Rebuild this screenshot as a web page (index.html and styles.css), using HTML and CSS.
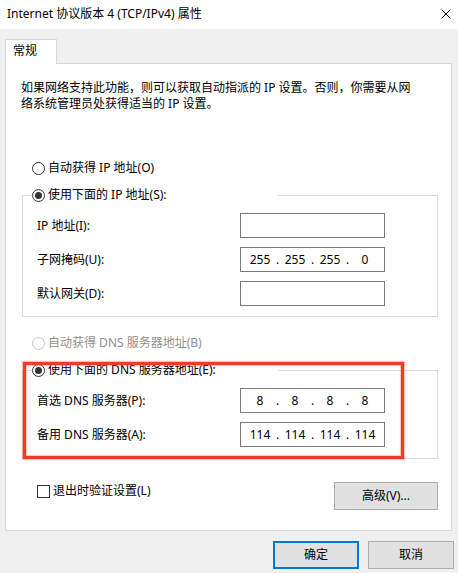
FILE: index.html
```html
<!DOCTYPE html>
<html lang="zh-CN">
<head>
<meta charset="utf-8">
<title>Internet 协议版本 4 (TCP/IPv4) 属性</title>
<link rel="stylesheet" href="styles.css">
</head>
<body>
<div class="window">
  <div class="titlebar">
    <span class="title">Internet 协议版本 4 (TCP/IPv4) 属性</span>
    <svg class="close" width="10" height="10" viewBox="0 0 10 10"><path d="M0.5 0.5 L9.5 9.5 M9.5 0.5 L0.5 9.5" stroke="#000" stroke-width="1" fill="none"/></svg>
  </div>
  <div class="body">
    <div class="tab">常规</div>
    <div class="panel">
      <p class="desc">如果网络支持此功能，则可以获取自动指派的 IP 设置。否则，你需要从网<br>络系统管理员处获得适当的 IP 设置。</p>

      <div class="radio-row auto-ip"><span class="radio"></span><span>自动获得 IP 地址(O)</span></div>

      <fieldset class="group g-ip">
        <legend><span class="radio checked"></span><span>使用下面的 IP 地址(S):</span></legend>
        <div class="field-grid">
          <span class="label">IP 地址(I):</span>
          <div class="ipbox"></div>
          <span class="label">子网掩码(U):</span>
          <div class="ipbox"><span class="seg">255</span><span class="dot">.</span><span class="seg">255</span><span class="dot">.</span><span class="seg">255</span><span class="dot">.</span><span class="seg">0</span></div>
          <span class="label">默认网关(D):</span>
          <div class="ipbox"></div>
        </div>
      </fieldset>

      <div class="radio-row auto-dns disabled"><span class="radio"></span><span>自动获得 DNS 服务器地址(B)</span></div>

      <fieldset class="group g-dns">
        <legend><span class="radio checked"></span><span>使用下面的 DNS 服务器地址(E):</span></legend>
        <div class="field-grid">
          <span class="label">首选 DNS 服务器(P):</span>
          <div class="ipbox"><span class="seg">8</span><span class="dot">.</span><span class="seg">8</span><span class="dot">.</span><span class="seg">8</span><span class="dot">.</span><span class="seg">8</span></div>
          <span class="label">备用 DNS 服务器(A):</span>
          <div class="ipbox"><span class="seg">114</span><span class="dot">.</span><span class="seg">114</span><span class="dot">.</span><span class="seg">114</span><span class="dot">.</span><span class="seg">114</span></div>
        </div>
      </fieldset>

      <div class="bottom-row">
        <label class="check"><span class="checkbox"></span><span>退出时验证设置(L)</span></label>
        <button class="btn advanced">高级(V)...</button>
      </div>

      <div class="highlight"></div>
    </div>
    <div class="actions">
      <button class="btn primary">确定</button>
      <button class="btn">取消</button>
    </div>
  </div>
</div>
</body>
</html>
```
FILE: styles.css
```css
* { box-sizing: border-box; }
html, body { margin: 0; padding: 0; }
body {
  width: 458px;
  height: 573px;
  background: #f0f0f0;
  font-family: "Noto Sans", "Noto Sans CJK SC", sans-serif;
  font-size: 12px;
  color: #000;
  overflow: hidden;
}
.window { width: 458px; height: 573px; display: flex; flex-direction: column; }

.titlebar {
  height: 29px;
  background: #fff;
  display: flex;
  align-items: center;
  justify-content: space-between;
  padding: 0 7px 2px 7px;
  flex: none;
}
.title { font-size: 12px; line-height: 16px; }
.close { display: block; }

.body {
  flex: 1;
  background: #f0f0f0;
  padding: 10px 0 0 5px;
}

.tab {
  position: relative;
  z-index: 1;
  width: 52px;
  height: 25px;
  margin-bottom: -1px;
  background: #fff;
  border: 1px solid #d9d9d9;
  border-bottom: none;
  padding-left: 7px;
  line-height: 22px;
}

.panel {
  position: relative;
  width: 447px;
  height: 468px;
  background: #fff;
  border: 1px solid #d9d9d9;
}

.desc {
  margin: 16px 0 0 15px;
  line-height: 16px;
  white-space: nowrap;
}

.radio-row {
  display: flex;
  align-items: center;
  height: 16px;
  line-height: 16px;
  margin-left: 26px;
}
.auto-ip { margin-top: 48px; }
.auto-dns { margin-top: 18px; }

.radio {
  width: 13px;
  height: 13px;
  border: 1px solid #333;
  border-radius: 50%;
  margin-right: 3px;
  flex: none;
  display: flex;
  align-items: center;
  justify-content: center;
  background: #fff;
}
.radio.checked::after {
  content: "";
  width: 7px;
  height: 7px;
  border-radius: 50%;
  background: #333;
}
.disabled { color: #8f8f8f; }
.disabled .radio { border-color: #c4c4c4; }

.group {
  margin: 0 13px 0 16px;
  padding: 10px 14px 10px 9px;
  border: 1px solid #dcdcdc;
  min-width: 0;
}
.g-ip { margin-top: 11px; }
.g-dns { margin-top: 11px; padding-bottom: 11px; }

.group legend {
  padding: 0;
  width: 246px;
  height: 16px;
  line-height: 16px;
  display: flex;
  align-items: center;
}

.field-grid {
  margin-left: 5px;
  display: grid;
  grid-template-columns: 203px 145px;
  grid-auto-rows: 25px;
  row-gap: 9px;
  align-items: center;
}
.label { line-height: 16px; }

.ipbox {
  width: 145px;
  height: 25px;
  border: 1px solid #7a7a7a;
  display: flex;
  align-items: center;
  padding-left: 5px;
  line-height: 16px;
}
.seg { width: 28px; text-align: center; }
.dot { width: 7px; text-align: center; }

.bottom-row {
  display: flex;
  justify-content: space-between;
  align-items: flex-start;
  margin: 23px 13px 0 31px;
}
.check {
  display: flex;
  align-items: center;
  height: 16px;
  line-height: 16px;
  margin-top: 1px;
}
.checkbox {
  width: 13px;
  height: 13px;
  border: 1px solid #333;
  margin-right: 3px;
  background: #fff;
}

.btn {
  font-family: inherit;
  font-size: 12px;
  color: #000;
  background: #e1e1e1;
  border: 1px solid #adadad;
  height: 28px;
  padding: 0;
  line-height: 16px;
}
.advanced { width: 104px; }

.actions {
  display: flex;
  justify-content: flex-end;
  gap: 9px;
  margin: 10px 4px 0 0;
}
.actions .btn { width: 86px; }
.btn.primary { border: 2px solid #0078d7; }

.highlight {
  position: absolute;
  left: 17px;
  top: 298px;
  width: 381px;
  height: 97px;
  border: 3px solid #f23b24;
  box-shadow: 0 0 1px 1px rgba(255, 80, 60, 0.35), inset 0 0 1px 1px rgba(255, 80, 60, 0.35);
  pointer-events: none;
}
```
